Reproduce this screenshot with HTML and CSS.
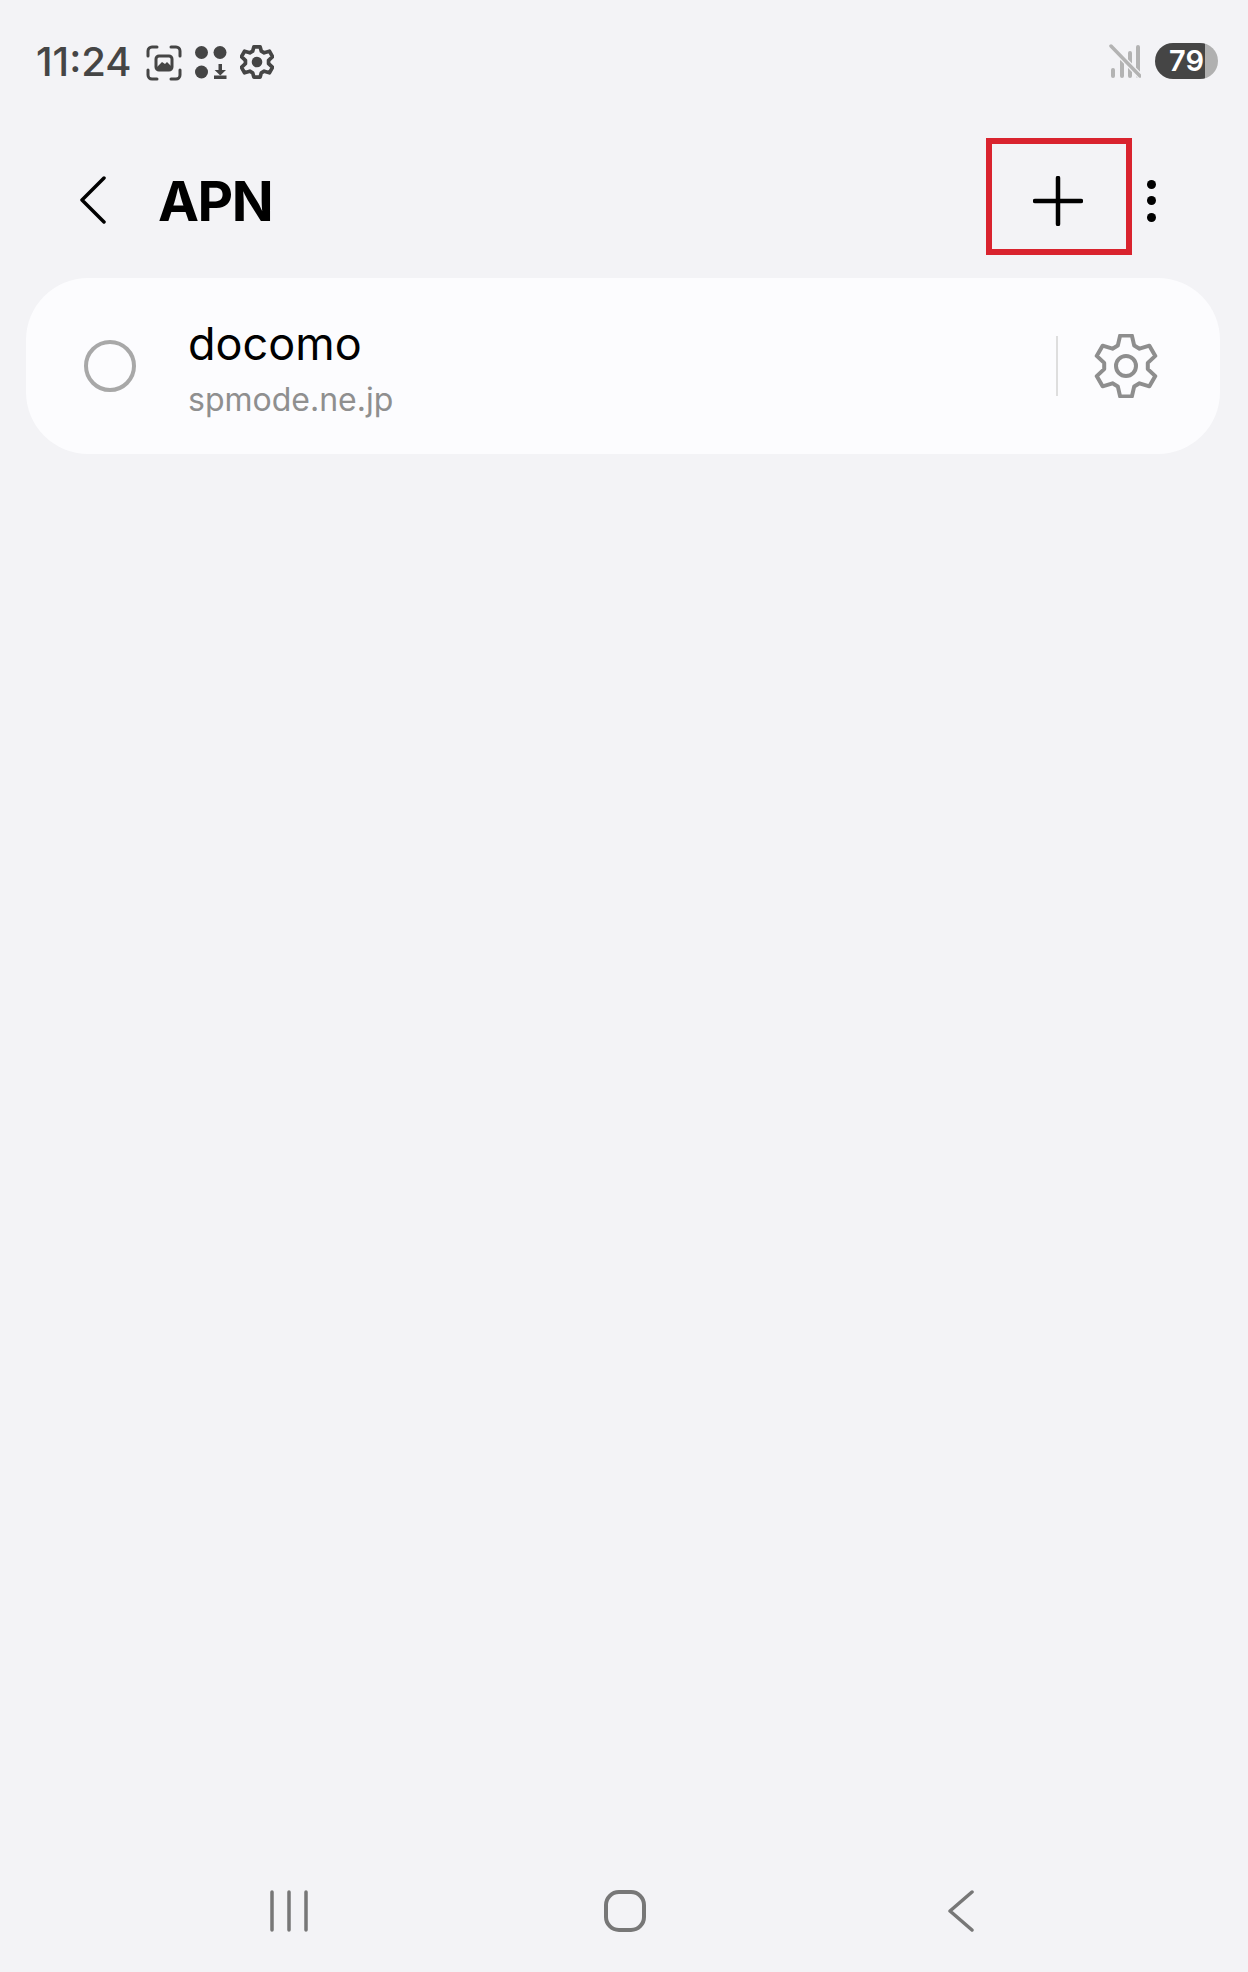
FILE: index.html
```html
<!DOCTYPE html>
<html lang="ja">
<head>
  <meta charset="UTF-8">
  <title>APN</title>
  <link rel="stylesheet" href="styles.css">
</head>
<body>
  <div id="statusbar">
    <span class="time">11:24</span>
    <svg class="st-capture" width="36" height="36" viewBox="0 0 36 36" fill="none" stroke="#454545" stroke-width="3" stroke-linecap="round">
      <path d="M2 11V6a4 4 0 0 1 4-4h5M25 2h5a4 4 0 0 1 4 4v5M34 25v5a4 4 0 0 1-4 4h-5M11 34H6a4 4 0 0 1-4-4v-5"/>
      <rect x="10" y="11" width="16" height="14" rx="3" stroke-width="3"/>
      <path d="M11 22l5-5 3 2 2-2 4 4v3H11z" fill="#454545" stroke="none"/>
    </svg>
    <svg class="st-apps" width="32" height="34" viewBox="0 0 32 34" fill="#454545">
      <circle cx="6.500" cy="6.500" r="6.500"/>
      <circle cx="25" cy="6.500" r="6.500"/>
      <circle cx="6.500" cy="26" r="6.500"/>
      <path d="M23.500 18h3.500v6h4l-5.700 5.500-5.700-5.500h3.900z"/>
      <rect x="19" y="29.500" width="12.500" height="3.500"/>
    </svg>
    <svg class="st-gear" width="34" height="34" viewBox="0 0 64 64" fill="none" stroke="#454545" stroke-width="7" stroke-linejoin="round">
      <path d="M23.800 11.600L26.100 3.600H37.900L40.200 11.600L45.500 14.700L55.400 11.700L61.300 21.900L53.800 28.900V35.100L61.300 42.100L55.400 52.300L45.500 49.300L40.200 52.400L37.900 60.400H26.100L23.800 52.400L18.500 49.300L8.600 52.300L2.700 42.100L10.200 35.100V28.900L2.700 21.900L8.600 11.700L18.500 14.700Z"/>
      <circle cx="32" cy="32" r="10" fill="#454545" stroke="none"/>
    </svg>
    <div class="st-right">
      <svg width="32" height="34" viewBox="0 0 32 34" stroke-linecap="round">
        <path d="M4 32v-6M13 32V17M21 32V9M29 32V3" stroke="#b3b3b3" stroke-width="4"/>
        <path d="M2 2l29 30" stroke="#f3f3f6" stroke-width="6"/>
        <path d="M2 2l29 30" stroke="#b3b3b3" stroke-width="3.500"/>
      </svg>
      <span class="battery">79</span>
    </div>
  </div>

  <div id="header">
    <svg class="back" width="26" height="48" viewBox="0 0 26 48" fill="none" stroke="#000" stroke-width="3.500" stroke-linecap="round" stroke-linejoin="round">
      <path d="M24 2L2 24l22 22"/>
    </svg>
    <h1>APN</h1>
    <div class="add-btn">
      <svg width="50" height="50" viewBox="0 0 50 50" stroke="#000" stroke-width="4.500" stroke-linecap="round">
        <path d="M25 2v46M2 25h46"/>
      </svg>
    </div>
    <div class="more"><i></i><i></i><i></i></div>
  </div>

  <div class="card">
    <span class="radio"></span>
    <div class="card-text">
      <div class="name">docomo</div>
      <div class="sub">spmode.ne.jp</div>
    </div>
    <span class="divider"></span>
    <svg class="card-gear" width="64" height="64" viewBox="0 0 64 64" fill="none" stroke="#8e8e8e" stroke-width="4" stroke-linejoin="round">
      <path d="M23.800 11.600L26.100 1.600H37.900L40.200 11.600L45.500 14.700L55.400 11.700L61.300 21.900L53.800 28.900V35.100L61.300 42.100L55.400 52.300L45.500 49.300L40.200 52.400L37.900 62.400H26.100L23.800 52.400L18.500 49.300L8.600 52.300L2.700 42.100L10.200 35.100V28.900L2.700 21.900L8.600 11.700L18.500 14.700Z"/>
      <circle cx="32" cy="32" r="10"/>
    </svg>
  </div>

  <div id="navbar">
    <svg width="38" height="42" viewBox="0 0 38 42" stroke="#777" stroke-width="3.500" stroke-linecap="round">
      <path d="M2 2v38M19 2v38M36 2v38"/>
    </svg>
    <svg class="nav-home" width="42" height="42" viewBox="0 0 42 42" fill="none" stroke="#777" stroke-width="4">
      <rect x="2" y="2" width="38" height="38" rx="13"/>
    </svg>
    <svg width="28" height="42" viewBox="0 0 28 42" fill="none" stroke="#777" stroke-width="3.500" stroke-linecap="round" stroke-linejoin="round">
      <path d="M25 2L3 21l22 19"/>
    </svg>
  </div>
</body>
</html>
```

FILE: styles.css
```css
html, body { height: 100%; }
body {
  margin: 0;
  height: 1972px;
  background: #f3f3f6;
  font-family: "Inter", "Liberation Sans", sans-serif;
  display: flex;
  flex-direction: column;
  overflow: hidden;
}

#statusbar {
  height: 138px;
  box-sizing: border-box;
  padding: 43px 30px 0 36px;
  display: flex;
  align-items: flex-start;
}
#statusbar svg { display: block; flex: none; }
.time {
  font-size: 40px;
  font-weight: 500;
  line-height: 37px;
  color: #454545;
  width: 92px;
  white-space: nowrap;
}
.st-capture { margin: 2px 0 0 18px; }
.st-apps { margin: 3px 0 0 13px; }
.st-gear { margin: 2px 0 0 13px; }
.st-right {
  margin-left: auto;
  display: flex;
  align-items: center;
  gap: 14px;
}
.battery {
  width: 63px;
  height: 36px;
  border-radius: 18px;
  background: linear-gradient(90deg, #454545 50px, #b0b0b0 50px);
  color: #fff;
  font-size: 29px;
  font-weight: 600;
  line-height: 36px;
  text-align: right;
  padding-right: 14px;
  box-sizing: border-box;
}

#header {
  height: 117px;
  display: flex;
  align-items: center;
  padding-left: 80px;
}
.back { margin-top: 6px; }
#header h1 {
  margin: 10px 0 0 52px;
  font-size: 55px;
  font-weight: 700;
  letter-spacing: -1.500px;
  line-height: 107px;
  color: #000;
}
.add-btn {
  margin-left: auto;
  width: 146px;
  height: 117px;
  box-sizing: border-box;
  border: 6px solid #d9232e;
  display: flex;
  align-items: center;
  justify-content: center;
}
.add-btn svg { display: block; margin: 8px 3px 0 0; }
.more {
  width: 38px;
  margin-top: 8px;
  margin-right: 78px;
  display: flex;
  flex-direction: column;
  align-items: center;
  gap: 7.500px;
}
.more i {
  width: 9px;
  height: 9px;
  border-radius: 50%;
  background: #000;
}

.card {
  margin: 23px 28px 0 26px;
  height: 176px;
  border-radius: 62px;
  background: #fcfcfe;
  display: flex;
  align-items: center;
}
.radio {
  width: 52px;
  height: 52px;
  margin-left: 58px;
  box-sizing: border-box;
  border: 4px solid #a8a8a8;
  border-radius: 50%;
  flex: none;
}
.card-text {
  margin: 40px 0 0 52px;
  align-self: flex-start;
  flex: 1;
}
.name {
  font-size: 45px;
  line-height: 52px;
  color: #000;
}
.sub {
  margin-top: 9px;
  font-size: 32px;
  line-height: 42px;
  color: #8f8f8f;
}
.divider {
  width: 2px;
  height: 60px;
  background: #dedede;
}
.card-gear { margin: 0 62px 0 36px; flex: none; }

#navbar {
  margin-top: auto;
  height: 39px;
  padding: 0 273px 43px 270px;
  display: flex;
  justify-content: space-between;
  align-items: flex-start;
}
#navbar svg { display: block; }
.nav-home { margin-right: 5px; }
```
